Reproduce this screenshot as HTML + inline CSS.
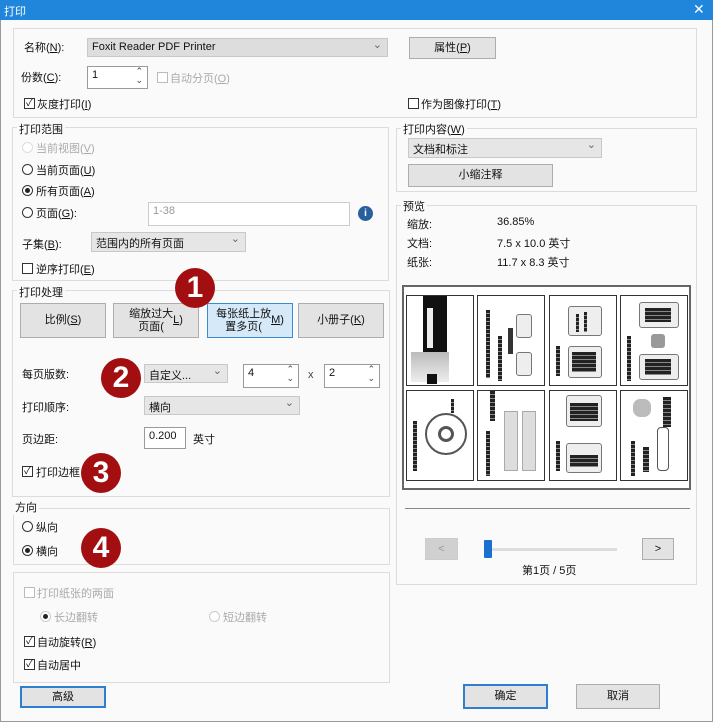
<!DOCTYPE html>
<html><head><meta charset="utf-8"><style>
*{box-sizing:border-box;margin:0;padding:0}
body{width:713px;height:722px;position:relative;overflow:hidden;background:#fafafa;font-family:"Liberation Sans","Noto Sans CJK SC",sans-serif;font-size:11px;color:#111}
.a{position:absolute;white-space:nowrap}
.g{position:absolute;border:1px solid #dcdcdc}
.gt{position:absolute;background:#fafafa;padding:0 2px;font-size:11px}
.sel{position:absolute;background:#e6e6e6;border:1px solid #c8c8c8;padding:2px 4px;font-size:11px}
.sel:after{content:"⌄";position:absolute;right:5px;top:-1px;color:#666;font-size:11px}
.btn{position:absolute;background:#e3e3e3;border:1px solid #adadad;text-align:center;font-size:11px;display:flex;align-items:center;justify-content:center;line-height:13px}
.blue{border:2px solid #2f7fcf}
.inp{position:absolute;background:#fff;border:1px solid #9a9a9a;padding:2px 4px;font-size:11px}
.sp:after{content:"⌃\A⌄";white-space:pre;position:absolute;right:4px;top:0;font-size:9px;line-height:9px;color:#444}
.cb{position:absolute;width:11px;height:11px;border:1px solid #333;background:#fff;font-size:10px;line-height:9px;text-align:center}
.rd{position:absolute;width:11px;height:11px;border:1px solid #333;border-radius:50%;background:#fff}
.rd.on:after{content:"";position:absolute;left:2px;top:2px;width:5px;height:5px;border-radius:50%;background:#222}
.dis{color:#aaa;border-color:#bbb}
.bd{position:absolute;width:40px;height:40px;border-radius:50%;background:#a30f10;color:#fff;font-weight:bold;font-size:30px;text-align:center;line-height:40px;font-family:"Liberation Sans",sans-serif}
.cell{position:absolute;width:68px;height:91px;background:#fff;border:1px solid #333}
.bar{position:absolute;background:repeating-linear-gradient(#222 0 3px,#888 3px 4px)}
.box{position:absolute;border:1px solid #777;border-radius:3px;background:#eee}
</style></head><body>
<div class="a" style="left:0;top:0;width:713px;height:20px;background:#1f86dc"></div>
<div class="a" style="left:4px;top:3px;color:#fff;font-size:11px">打印</div>
<div class="a" style="left:693px;top:1px;color:#fff;font-size:14px">✕</div>
<div class="a" style="left:0;top:20px;width:713px;height:702px;border:1px solid #999;border-top:none"></div>

<div class="g" style="left:13px;top:28px;width:684px;height:90px"></div>
<div class="a" style="left:24px;top:39px">名称(<u>N</u>):</div>
<div class="sel" style="left:87px;top:38px;width:301px;height:19px;background:#ddd">Foxit Reader PDF Printer</div>
<div class="btn" style="left:409px;top:37px;width:87px;height:22px">属性(<u>P</u>)</div>
<div class="a" style="left:21px;top:69px">份数(<u>C</u>):</div>
<div class="inp sp" style="left:87px;top:66px;width:61px;height:23px">1</div>
<div class="cb dis" style="left:157px;top:72px"></div><div class="a" style="left:170px;top:70px;color:#aaa">自动分页(<u>O</u>)</div>
<div class="cb" style="left:24px;top:98px">✓</div><div class="a" style="left:37px;top:96px">灰度打印(<u>I</u>)</div>
<div class="cb" style="left:408px;top:98px"></div><div class="a" style="left:421px;top:96px">作为图像打印(<u>T</u>)</div>

<div class="g" style="left:12px;top:127px;width:377px;height:154px"></div>
<div class="gt" style="left:17px;top:121px">打印范围</div>
<div class="rd dis" style="left:22px;top:142px;border-color:#ddd"></div><div class="a" style="left:36px;top:140px;color:#aaa">当前视图(<u>V</u>)</div>
<div class="rd" style="left:22px;top:164px"></div><div class="a" style="left:36px;top:162px">当前页面(<u>U</u>)</div>
<div class="rd on" style="left:22px;top:185px"></div><div class="a" style="left:36px;top:183px">所有页面(<u>A</u>)</div>
<div class="rd" style="left:22px;top:207px"></div><div class="a" style="left:36px;top:205px">页面(<u>G</u>):</div>
<div class="inp" style="left:148px;top:202px;width:202px;height:24px;border-color:#ccc;color:#999">1-38</div>
<div class="a" style="left:358px;top:206px;width:15px;height:15px;border-radius:50%;background:#2a5f9e;color:#fff;font-size:10px;font-weight:bold;text-align:center;line-height:15px">i</div>
<div class="a" style="left:22px;top:236px">子集(<u>B</u>):</div>
<div class="sel" style="left:91px;top:232px;width:155px;height:20px">范围内的所有页面</div>
<div class="cb" style="left:22px;top:263px"></div><div class="a" style="left:36px;top:261px">逆序打印(<u>E</u>)</div>

<div class="g" style="left:12px;top:290px;width:378px;height:207px"></div>
<div class="gt" style="left:17px;top:284px">打印处理</div>
<div class="btn" style="left:20px;top:303px;width:86px;height:35px">比例(<u>S</u>)</div>
<div class="btn" style="left:113px;top:303px;width:86px;height:35px">缩放过大<br>页面(<u>L</u>)</div>
<div class="btn" style="left:207px;top:303px;width:86px;height:35px;background:#d6e9f8;border-color:#3a8bd0">每张纸上放<br>置多页(<u>M</u>)</div>
<div class="btn" style="left:298px;top:303px;width:86px;height:35px">小册子(<u>K</u>)</div>
<div class="a" style="left:22px;top:366px">每页版数:</div>
<div class="sel" style="left:144px;top:364px;width:84px;height:19px">自定义...</div>
<div class="inp sp" style="left:243px;top:364px;width:56px;height:24px">4</div>
<div class="a" style="left:308px;top:369px;color:#444">x</div>
<div class="inp sp" style="left:324px;top:364px;width:56px;height:24px">2</div>
<div class="a" style="left:22px;top:399px">打印顺序:</div>
<div class="sel" style="left:144px;top:396px;width:156px;height:19px">横向</div>
<div class="a" style="left:22px;top:431px">页边距:</div>
<div class="inp" style="left:144px;top:427px;width:42px;height:22px">0.200</div>
<div class="a" style="left:193px;top:431px">英寸</div>
<div class="cb" style="left:22px;top:466px">✓</div><div class="a" style="left:36px;top:464px">打印边框</div>

<div class="g" style="left:13px;top:508px;width:377px;height:57px"></div>
<div class="gt" style="left:13px;top:499px">方向</div>
<div class="rd" style="left:22px;top:521px"></div><div class="a" style="left:36px;top:519px">纵向</div>
<div class="rd on" style="left:22px;top:545px"></div><div class="a" style="left:36px;top:543px">横向</div>

<div class="g" style="left:13px;top:572px;width:377px;height:111px"></div>
<div class="cb dis" style="left:24px;top:587px"></div><div class="a" style="left:37px;top:585px;color:#aaa">打印纸张的两面</div>
<div class="rd on dis" style="left:40px;top:611px;border-color:#ccc"></div><div class="a" style="left:54px;top:609px;color:#aaa">长边翻转</div>
<div class="rd dis" style="left:209px;top:611px;border-color:#ccc"></div><div class="a" style="left:223px;top:609px;color:#aaa">短边翻转</div>
<div class="cb" style="left:24px;top:636px">✓</div><div class="a" style="left:37px;top:634px">自动旋转(<u>R</u>)</div>
<div class="cb" style="left:24px;top:659px">✓</div><div class="a" style="left:37px;top:657px">自动居中</div>

<div class="btn blue" style="left:20px;top:686px;width:86px;height:22px">高级</div>
<div class="btn blue" style="left:463px;top:684px;width:85px;height:25px">确定</div>
<div class="btn" style="left:576px;top:684px;width:84px;height:25px">取消</div>

<div class="g" style="left:396px;top:128px;width:301px;height:64px"></div>
<div class="gt" style="left:401px;top:121px">打印内容(<u>W</u>)</div>
<div class="sel" style="left:408px;top:138px;width:194px;height:20px">文档和标注</div>
<div class="btn" style="left:408px;top:164px;width:145px;height:23px">小缩注释</div>

<div class="g" style="left:396px;top:205px;width:301px;height:380px"></div>
<div class="gt" style="left:401px;top:198px">预览</div>
<div class="a" style="left:407px;top:216px">缩放:</div><div class="a" style="left:497px;top:216px">36.85%</div>
<div class="a" style="left:407px;top:235px">文档:</div><div class="a" style="left:497px;top:235px">7.5 x 10.0 英寸</div>
<div class="a" style="left:407px;top:254px">纸张:</div><div class="a" style="left:497px;top:254px">11.7 x 8.3 英寸</div>

<div class="a" style="left:402px;top:285px;width:289px;height:205px;border:2px solid #666;background:#fff"></div>
<div class="cell" style="left:406px;top:295px"><div class="a" style="left:16px;top:0;width:24px;height:62px;background:#111"></div><div class="a" style="left:20px;top:12px;width:6px;height:40px;background:#eee"></div><div class="a" style="left:4px;top:56px;width:38px;height:30px;background:linear-gradient(#bbb,#eee)"></div><div class="a" style="left:20px;top:78px;width:10px;height:10px;background:#111"></div></div>
<div class="cell" style="left:477px;top:295px"><div class="bar" style="left:8px;top:14px;width:4px;height:68px"></div><div class="bar" style="left:20px;top:40px;width:4px;height:45px"></div><div class="a" style="left:30px;top:32px;width:5px;height:26px;background:#333"></div><div class="box" style="left:38px;top:18px;width:16px;height:24px"></div><div class="box" style="left:38px;top:56px;width:16px;height:24px"></div></div>
<div class="cell" style="left:549px;top:295px"><div class="box" style="left:18px;top:10px;width:34px;height:30px"></div><div class="bar" style="left:26px;top:18px;width:3px;height:18px"></div><div class="bar" style="left:34px;top:16px;width:3px;height:20px"></div><div class="bar" style="left:6px;top:50px;width:4px;height:30px"></div><div class="box" style="left:18px;top:50px;width:34px;height:32px"></div><div class="bar" style="left:22px;top:56px;width:24px;height:20px"></div></div>
<div class="cell" style="left:620px;top:295px"><div class="box" style="left:18px;top:6px;width:40px;height:26px"></div><div class="bar" style="left:24px;top:12px;width:26px;height:14px"></div><div class="a" style="left:30px;top:38px;width:14px;height:14px;background:#999;border-radius:3px"></div><div class="bar" style="left:6px;top:40px;width:4px;height:45px"></div><div class="box" style="left:18px;top:58px;width:40px;height:26px"></div><div class="bar" style="left:24px;top:63px;width:26px;height:16px"></div></div>
<div class="cell" style="left:406px;top:390px"><div class="a" style="left:18px;top:22px;width:42px;height:42px;border:2px solid #555;border-radius:50%"></div><div class="a" style="left:31px;top:35px;width:16px;height:16px;border:3px solid #555;border-radius:50%"></div><div class="bar" style="left:6px;top:30px;width:4px;height:50px"></div><div class="bar" style="left:44px;top:8px;width:3px;height:14px"></div></div>
<div class="cell" style="left:477px;top:390px"><div class="bar" style="left:12px;top:0;width:5px;height:30px"></div><div class="a" style="left:26px;top:20px;width:14px;height:60px;background:#ddd;border:1px solid #aaa"></div><div class="a" style="left:44px;top:20px;width:14px;height:60px;background:#ddd;border:1px solid #aaa"></div><div class="bar" style="left:8px;top:40px;width:4px;height:45px"></div></div>
<div class="cell" style="left:549px;top:390px"><div class="box" style="left:16px;top:4px;width:36px;height:32px"></div><div class="bar" style="left:20px;top:12px;width:28px;height:18px"></div><div class="bar" style="left:6px;top:50px;width:4px;height:30px"></div><div class="box" style="left:16px;top:52px;width:36px;height:30px"></div><div class="bar" style="left:20px;top:64px;width:28px;height:12px"></div></div>
<div class="cell" style="left:620px;top:390px"><div class="a" style="left:12px;top:8px;width:18px;height:18px;background:#bbb;border-radius:40%"></div><div class="bar" style="left:42px;top:6px;width:8px;height:30px"></div><div class="a" style="left:36px;top:36px;width:12px;height:44px;border:1px solid #555;border-radius:4px"></div><div class="bar" style="left:10px;top:50px;width:4px;height:35px"></div><div class="bar" style="left:22px;top:56px;width:6px;height:25px"></div></div>

<div class="a" style="left:405px;top:508px;width:285px;height:1px;background:#888"></div>
<div class="btn" style="left:425px;top:538px;width:33px;height:22px;background:#d0d0d0;border-color:#ccc;color:#999">&lt;</div>
<div class="a" style="left:490px;top:548px;width:127px;height:3px;background:#ddd"></div>
<div class="a" style="left:484px;top:540px;width:8px;height:18px;background:#1a6fd0;border-radius:1px"></div>
<div class="btn" style="left:642px;top:538px;width:32px;height:22px">&gt;</div>
<div class="a" style="left:522px;top:562px">第1页 / 5页</div>

<div class="bd" style="left:175px;top:268px">1</div>
<div class="bd" style="left:101px;top:358px">2</div>
<div class="bd" style="left:81px;top:453px">3</div>
<div class="bd" style="left:81px;top:528px">4</div>
</body></html>
